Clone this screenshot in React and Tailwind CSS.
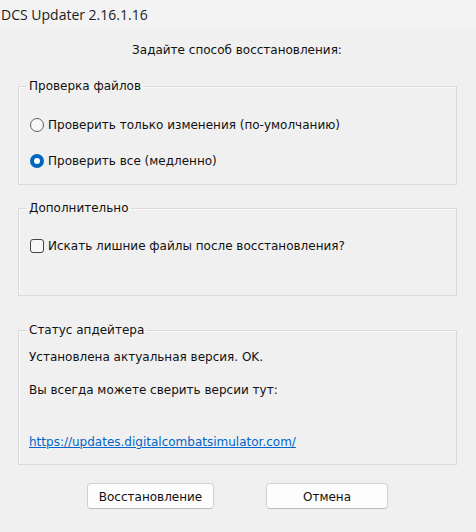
import React from 'react';

const Radio = ({ checked, label }) => (
  <label className="flex items-center h-[16px]">
    {checked ? (
      <span className="w-[14px] h-[14px] rounded-full bg-[#0067c0] flex items-center justify-center">
        <span className="w-[6px] h-[6px] rounded-full bg-white"></span>
      </span>
    ) : (
      <span className="w-[14px] h-[14px] rounded-full border border-[#5f5f5f] bg-[#f7f7f7]"></span>
    )}
    <span className="ml-[4px]">{label}</span>
  </label>
);

const Group = ({ title, className, children }) => (
  <fieldset className={`mx-[18px] w-[439px] border border-[#dadada] shadow-[inset_1px_1px_0_#fafafa] ${className}`}>
    <legend className="ml-[8px] px-[2px] h-[16px] leading-[16px]">{title}</legend>
    {children}
  </fieldset>
);

export default function App() {
  return (
    <div
      className="w-[476px] h-[532px] bg-[#f0f0f0] text-[12px] leading-[16px] text-[#111] overflow-hidden"
      style={{ fontFamily: '"DejaVu Sans", "Liberation Sans", sans-serif' }}
    >
      <div className="h-[29px] bg-[#f3f3f3] flex items-center">
        <span
          className="ml-[1px] text-[14px] text-[#1c1c1c]"
          style={{ fontFamily: '"Open Sans", "Noto Sans", sans-serif' }}
        >
          DCS Updater 2.16.1.16
        </span>
      </div>

      <div className="mt-[13px] h-[16px] text-center pr-[2px]">Задайте способ восстановления:</div>

      <Group title="Проверка файлов" className="mt-[20px] pb-[15px]">
        <div className="pl-[11px] pt-[23px] flex flex-col gap-[20px]">
          <Radio label="Проверить только изменения (по-умолчанию)" />
          <Radio checked label="Проверить все (медленно)" />
        </div>
      </Group>

      <Group title="Дополнительно" className="mt-[15px] pb-[41px]">
        <div className="pl-[11px] pt-[22px]">
          <label className="flex items-center h-[16px]">
            <span className="w-[14px] h-[14px] rounded-[3px] border border-[#444] bg-[#f7f7f7]"></span>
            <span className="ml-[4px]">Искать лишние файлы после восстановления?</span>
          </label>
        </div>
      </Group>

      <Group title="Статус апдейтера" className="mt-[26px] pb-[14px]">
        <div className="pl-[10px] pt-[11px] flex flex-col">
          <div>Установлена актуальная версия. OK.</div>
          <div className="mt-[17px]">Вы всегда можете сверить версии тут:</div>
          <a href="#" className="mt-[36px] text-[#0066cc] underline self-start">
            https://updates.digitalcombatsimulator.com/
          </a>
        </div>
      </Group>

      <div className="mt-[18px] flex">
        <button className="ml-[87px] w-[127px] h-[26px] pt-[2px] bg-[#fdfdfd] border border-[#d0d0d0] border-b-[#bdbdbd] rounded-[4px]">
          Восстановление
        </button>
        <button className="ml-[52px] w-[122px] h-[26px] pt-[2px] bg-[#fdfdfd] border border-[#d0d0d0] border-b-[#bdbdbd] rounded-[4px]">
          Отмена
        </button>
      </div>
    </div>
  );
}
